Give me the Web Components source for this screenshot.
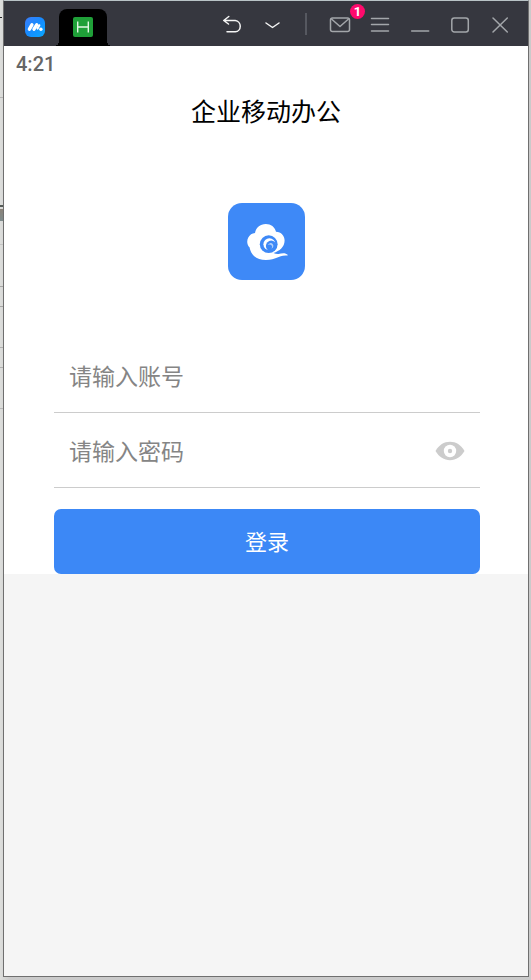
<!DOCTYPE html>
<html lang="zh-CN">
<head>
<meta charset="utf-8">
<meta name="viewport" content="width=device-width, initial-scale=1">
<title>企业移动办公</title>
<style>
html { height: 100%; }
body {
  margin: 0; min-height: 100%; display: flex; box-sizing: border-box;
  padding: 0 2px 3px 3px;
  font-family: Roboto, "Noto Sans CJK SC", sans-serif;
  /* page behind the window: thin table rules along the left edge */
  background:
    linear-gradient(#222, #222) 0 17px / 2px 1px no-repeat,
    linear-gradient(#555b58, #555b58) 0 205px / 4px 2px no-repeat,
    linear-gradient(#8b8279, #7d8b8c) 0 209px / 4px 12px no-repeat,
    linear-gradient(#b5b5b5, #b5b5b5) 0 97px / 4px 1px no-repeat,
    linear-gradient(#c4c4c4, #c4c4c4) 0 244px / 4px 1px no-repeat,
    linear-gradient(#a5a5a5, #a5a5a5) 0 286px / 4px 1px no-repeat,
    linear-gradient(#a5a5a5, #a5a5a5) 0 306px / 4px 1px no-repeat,
    linear-gradient(#b0b0b0, #b0b0b0) 0 347px / 4px 1px no-repeat,
    linear-gradient(#b0b0b0, #b0b0b0) 0 367px / 4px 1px no-repeat,
    linear-gradient(#b8b8b8, #b8b8b8) 0 408px / 4px 1px no-repeat,
    linear-gradient(90deg, #dddedc, #cacaca 10px);
}
emulator-window { flex: 1; }
</style>
</head>
<body>
<emulator-window>
  <title-bar slot="bar"></title-bar>
  <login-screen heading="企业移动办公">
    <status-bar slot="status">4:21</status-bar>
    <cloud-logo slot="logo"></cloud-logo>
    <login-form slot="form"></login-form>
  </login-screen>
</emulator-window>

<script>
function define(name, html, setup) {
  const tpl = document.createElement('template');
  tpl.innerHTML = html;
  customElements.define(name, class extends HTMLElement {
    constructor() {
      super();
      this.attachShadow({ mode: 'open' }).append(tpl.content.cloneNode(true));
    }
    connectedCallback() { if (setup) setup(this, this.shadowRoot); }
  });
}

define('emulator-window', `
<style>
:host { display: flex; flex-direction: column; border: 1px solid #6f6f6f; border-top-color: #b9c3c6; background: #f5f5f5; }
</style>
<slot name="bar"></slot><slot></slot>`);

define('bar-button', `
<style>
:host { display: block; width: 40px; }
button { display: grid; place-items: center; width: 100%; height: 100%; padding: 0; border: 0; background: none; color: inherit; cursor: pointer; position: relative; }
::slotted(svg) { display: block; fill: none; stroke: currentColor; stroke-width: 1.5; stroke-linecap: round; stroke-linejoin: round; }
b { position: absolute; top: 1px; right: -5px; width: 15px; height: 15px; border-radius: 50%; background: #ff0a6c; color: #fff; font: 700 13px/15px Roboto, sans-serif; text-align: center; }
b:empty { display: none; }
</style>
<button type="button"><slot></slot><b></b></button>`, (el, root) => {
  root.querySelector('button').setAttribute('aria-label', el.getAttribute('label') || '');
  root.querySelector('b').textContent = el.getAttribute('badge') || '';
});

define('title-bar', `
<style>
:host { display: flex; height: 45px; padding: 0 8px 0 7px; background: #36373f; color: #a3a6aa; }
.tab { display: grid; place-items: center; width: 48px; padding: 0; border: 0; background: none; cursor: pointer; }
.tab.active { position: relative; height: 37px; align-self: flex-end; border-radius: 8px 8px 0 0; background: #000; }
.active::before, .active::after { content: ""; position: absolute; bottom: 0; width: 5px; height: 5px; }
.active::before { right: 100%; background: radial-gradient(circle at 0 0, transparent 5px, #000 5px); }
.active::after { left: 100%; background: radial-gradient(circle at 100% 0, transparent 5px, #000 5px); }
.active svg { margin-bottom: 2px; }
.home svg { margin-top: 7px; }
svg { display: block; }
.space { flex: 1; }
.light { color: #f5f5f5; }
.rule { align-self: center; width: 2px; height: 22px; margin: 1px 13px 0; background: #565860; }
bar-button { padding-top: 2px; box-sizing: border-box; }
</style>
<button class="tab home" type="button" aria-label="主页">
  <svg width="20" height="20" viewBox="0 0 20 20"><defs><linearGradient id="m" x1="0" y1="0" x2="1" y2="1"><stop offset="0" stop-color="#3d7cf8"/><stop offset=".5" stop-color="#158cff"/><stop offset="1" stop-color="#08a8ff"/></linearGradient></defs><rect width="20" height="20" rx="6" fill="url(#m)"/><path d="M4.400 12.200 6.900 7.800M9 12.200 11.700 7.800" stroke="#fff" stroke-width="3.400" stroke-linecap="round"/><path d="M12.600 11.500 14.300 8.300" stroke="#fff" stroke-width="2.200" stroke-linecap="round"/><circle cx="15.900" cy="12.200" r="1.700" fill="#fff"/></svg>
</button>
<button class="tab active" type="button" aria-label="H 应用">
  <svg width="20" height="20" viewBox="0 0 20 20"><rect width="20" height="20" rx="2" fill="#1fa038"/><path d="M4.700 4.500v11M15.300 4.500v11M4.700 10h10.600" stroke="#e2f6e4" stroke-width="1.400" fill="none"/></svg>
</button>
<div class="space"></div>
<bar-button class="light" label="返回"><svg width="20" height="20" viewBox="0 0 20 20"><path d="M6.800 1.500 1.700 5.500 6.500 9M2 5.500h11.300a5.700 5.700 0 0 1 0 11.300H5"/></svg></bar-button>
<bar-button class="light" label="展开"><svg width="20" height="20" viewBox="0 0 20 20"><path d="M4 8 10.500 12.500 17 8"/></svg></bar-button>
<div class="rule"></div>
<bar-button label="消息" badge="1"><svg width="22" height="20" viewBox="0 0 22 20"><rect x="1.500" y="3" width="19" height="13.500" rx="2"/><path d="M2.500 4 11 11.500 19.500 4"/></svg></bar-button>
<bar-button label="菜单"><svg width="20" height="20" viewBox="0 0 20 20"><path d="M1.500 3.500h17M1.500 9.500h17M1.500 16h17"/></svg></bar-button>
<bar-button label="最小化"><svg width="20" height="20" viewBox="0 0 20 20"><path d="M1.700 16h17"/></svg></bar-button>
<bar-button label="最大化"><svg width="20" height="20" viewBox="0 0 20 20"><rect x="1.800" y="3" width="16.500" height="14" rx="2.500"/></svg></bar-button>
<bar-button label="关闭"><svg width="20" height="20" viewBox="0 0 20 20"><path d="M3 3 17.300 17M17.300 3 3 17"/></svg></bar-button>`);

define('status-bar', `
<style>
:host { display: block; height: 36px; padding: 0 12px; color: #666; font: 500 20px/36px Roboto, sans-serif; }
</style><slot></slot>`);

define('cloud-logo', `
<style>
:host { display: block; width: 77px; height: 77px; }
svg { display: block; }
</style>
<svg width="77" height="77" viewBox="0 0 77 77" role="img" aria-label="云">
<rect width="77" height="77" rx="14" fill="#3e89f7"/>
<path d="M59.300 51.600C56 49.200 53.500 50.800 50.500 50.900 48.500 51 47 50.600 45.500 50 51.500 48 56.600 44 56.600 37.500c0-4.700-3.400-8.500-8.600-8.700C46.800 24 43 21 37.800 21 32 21 28 24.500 27 30.100c-3 .2-5.200 1.800-6.700 4.500-1.800 3.200-1.300 7.200 1.200 9.700C23 52.500 29 57 38 57c11 0 12-5 21-4.400.9 0 .9-.6.3-1Z" fill="#fff"/>
<circle cx="40.700" cy="41.200" r="8.900" fill="#3e89f7"/>
<circle cx="41.400" cy="41.200" r="6" fill="#fff"/>
<circle cx="43.200" cy="42.900" r="5.300" fill="#3e89f7"/>
<path d="M39.900 42a2.800 2.800 0 1 1 3.300 3.600c1.200-1.300 1.100-2.600.2-3.400-.9-.9-2.200-.9-3.500-.2Z" fill="#fff" opacity=".6"/>
</svg>`);

define('login-screen', `
<style>
:host { display: flex; flex-direction: column; background: #fff; }
h1 { margin: 0; height: 60px; color: #000; font: 400 25px/56px "Noto Sans CJK SC", sans-serif; text-align: center; }
.logo { display: grid; justify-items: center; padding: 61px 0 58px; }
</style>
<slot name="status"></slot><h1></h1>
<div class="logo"><slot name="logo"></slot></div>
<slot name="form"></slot>`, (el, root) => {
  root.querySelector('h1').textContent = el.getAttribute('heading');
});

define('text-field', `
<style>
:host { display: flex; align-items: center; box-sizing: border-box; height: 75px; padding: 0 15px; border-bottom: 1px solid #ccc; }
input { flex: 1; min-width: 0; height: 60px; padding: 0; border: 0; outline: 0; background: none; color: #333; font: 400 23px "Noto Sans CJK SC", sans-serif; }
input::placeholder { color: #858585; opacity: 1; }
</style>
<input><slot></slot>`, (el, root) => {
  const input = root.querySelector('input');
  input.type = el.getAttribute('type') || 'text';
  input.placeholder = el.getAttribute('placeholder');
  input.setAttribute('aria-label', input.placeholder);
});

define('login-form', `
<style>
:host { display: block; padding: 0 48px 0 50px; }
form { display: flex; flex-direction: column; }
.eye { padding: 2px 0 0; border: 0; background: none; cursor: pointer; }
.eye svg { display: block; }
.submit { margin-top: 21px; height: 65px; padding: 0 0 4px; border: 0; border-radius: 7px; background: #3c88f6; color: #fff; font: 400 22px "Noto Sans CJK SC", sans-serif; cursor: pointer; }
</style>
<form>
  <text-field placeholder="请输入账号"></text-field>
  <text-field type="password" placeholder="请输入密码">
    <button class="eye" type="button" aria-label="显示密码">
      <svg width="30" height="20" viewBox="0 0 30 20"><path d="M.5 10C4 4 9 .8 15 .8S26 4 29.500 10C26 16 21 19.200 15 19.200S4 16 .5 10Z" fill="#ccc"/><circle cx="15" cy="10" r="6.200" fill="#fff"/><circle cx="15" cy="10" r="2.200" fill="#ccc"/></svg>
    </button>
  </text-field>
  <button class="submit" type="submit">登录</button>
</form>`, (el, root) => {
  root.querySelector('form').addEventListener('submit', e => e.preventDefault());
  const field = root.querySelector('[type=password]');
  root.querySelector('.eye').addEventListener('click', () => {
    const input = field.shadowRoot.querySelector('input');
    input.type = input.type === 'password' ? 'text' : 'password';
  });
});
</script>
</body>
</html>
